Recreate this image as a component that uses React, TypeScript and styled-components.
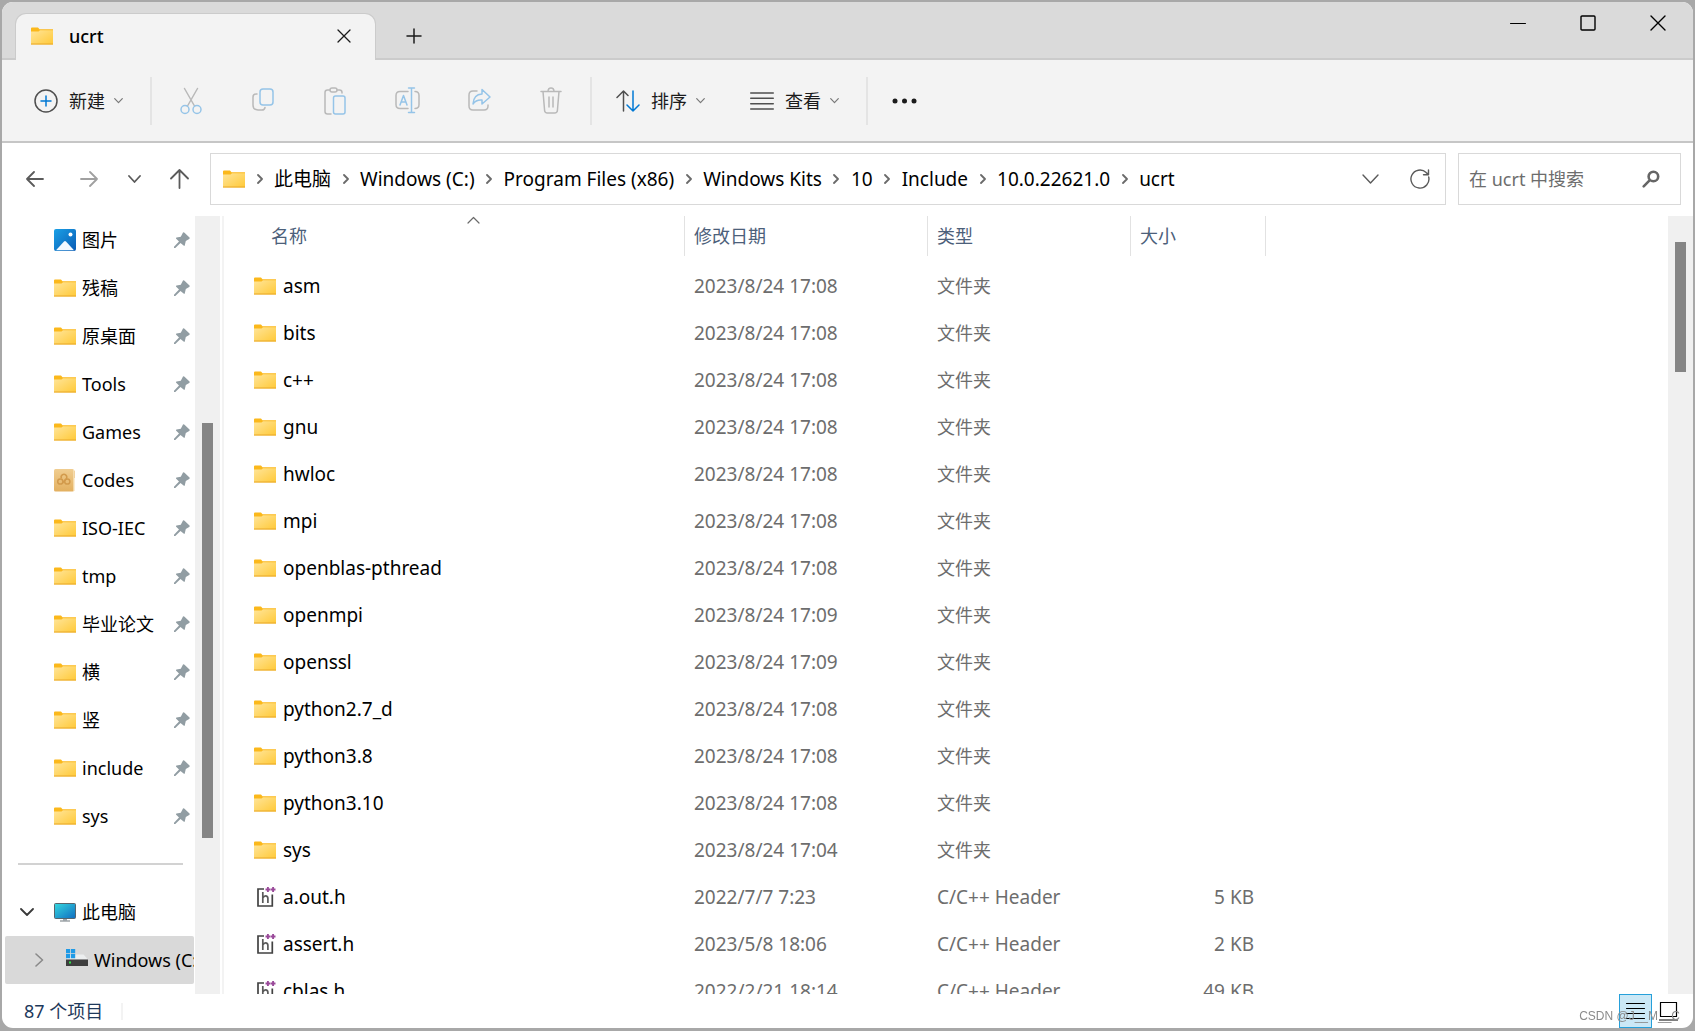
import React from "react";
import styled, { createGlobalStyle, css } from "styled-components";

const Global = createGlobalStyle`
  * { box-sizing: border-box; }
  html, body, #root { height: 100%; }
  body {
    margin: 0;
    overflow: hidden;
    background: #a8a8a8;
    color: #000;
    font: 19px/24px "Noto Sans", "Noto Sans CJK SC", sans-serif;
  }
  button, input, table { font: inherit; color: inherit; }
  button { border: 0; padding: 0; background: none; display: flex; align-items: center; }
  svg { display: block; flex: none; }
  ul, ol { list-style: none; margin: 0; padding: 0; }
  a { color: inherit; text-decoration: none; }
`;

const Window = styled.main`
  height: 100vh;
  padding: 2px 2px 3px;
  display: flex;
  flex-direction: column;
`;
const Body = styled.div`
  flex: 1;
  min-height: 0;
  display: flex;
  flex-direction: column;
  background: #fff;
  border-radius: 11px;
  overflow: hidden;
`;

const TitleBar = styled.header`
  height: 58px;
  flex: none;
  display: flex;
  align-items: flex-end;
  padding-left: 13px;
  background: #dadada;
  box-shadow: inset 0 -2px #cbcbcb;
`;
const Tab = styled.div`
  width: 361px;
  height: 47px;
  display: flex;
  align-items: center;
  padding: 0 24px 2px 15px;
  border: 1px solid #cbcbcb;
  border-bottom: 0;
  border-radius: 11px 11px 0 0;
  background: #f3f3f3;
`;
const TabTitle = styled.span`
  flex: 1;
  margin-left: 16px;
  font-size: 18px;
  font-weight: 500;
`;
const NewTab = styled.button`
  height: 47px;
  margin-left: 30px;
  padding-bottom: 2px;
`;
const Caption = styled.div`
  margin-left: auto;
  align-self: flex-start;
  display: flex;
`;
const CaptionButton = styled.button`
  width: 70px;
  height: 41px;
  justify-content: center;
`;

const Toolbar = styled.div`
  height: 83px;
  flex: none;
  display: flex;
  align-items: center;
  background: #f3f3f3;
  border-bottom: 2px solid #c6c6c6;
  font-size: 18px;
  color: #1b1b1b;
`;
const ToolMenu = styled.button<{ $width: number; $start?: number }>`
  width: ${(p) => p.$width}px;
  height: 48px;
  gap: 9px;
  padding-left: ${(p) => p.$start ?? 24}px;
`;
const MenuLabel = styled.span`
  margin-left: 2px;
`;
const ToolButton = styled.button`
  width: 72px;
  height: 48px;
  justify-content: center;
`;
const ToolGroup = styled.div`
  display: flex;
  padding: 0 3px;
`;
const Divider = styled.span`
  width: 2px;
  height: 48px;
  background: #e4e4e4;
`;

const AddressRow = styled.div`
  height: 73px;
  flex: none;
  display: flex;
  align-items: center;
  padding: 0 12px 1px 0;
`;
const NavButtons = styled.nav`
  width: 208px;
  display: flex;
  padding-left: 6px;
`;
const NavButton = styled.button<{ $slim?: boolean }>`
  width: ${(p) => (p.$slim ? 36 : 54)}px;
  height: 48px;
  justify-content: center;
`;
const AddressBox = styled.div`
  flex: 1;
  min-width: 0;
  height: 52px;
  display: flex;
  align-items: center;
  padding-left: 12px;
  border: 1px solid #d9d9d9;
`;
const Crumbs = styled.ol`
  flex: 1;
  min-width: 0;
  display: flex;
  overflow: hidden;
`;
const Crumb = styled.li`
  display: flex;
  align-items: center;
  white-space: nowrap;
`;
const CrumbArrow = styled.span`
  width: 29px;
  display: flex;
  justify-content: center;
`;
const BoxButton = styled.button`
  width: 50px;
  height: 50px;
  justify-content: center;
`;
const SearchBox = styled.label`
  width: 223px;
  height: 52px;
  display: flex;
  align-items: center;
  margin-left: 12px;
  padding: 0 20px 0 10px;
  border: 1px solid #d9d9d9;
`;
const SearchInput = styled.input`
  flex: 1;
  min-width: 0;
  border: 0;
  padding: 0;
  outline: 0;
  background: none;
  font-size: 18px;
  &::placeholder { color: #6d6d6d; opacity: 1; }
`;

const Content = styled.div`
  flex: 1;
  min-height: 0;
  display: flex;
`;
const Sidebar = styled.nav`
  width: 193px;
  flex: none;
  overflow: hidden;
`;
const sideRow = css`
  height: 48px;
  display: flex;
  align-items: center;
  white-space: nowrap;
  font-size: 18px;
`;
const QuickLink = styled.a`
  ${sideRow}
  padding: 0 5px 0 52px;
  gap: 6px;
`;
const LinkText = styled.span`
  flex: 1;
`;
const SideDivider = styled.hr`
  height: 2px;
  margin: 23px 12px 23px 16px;
  border: 0;
  background: #d2d2d2;
`;
const TreeItem = styled.a<{ $selected?: boolean; $depth: number }>`
  ${sideRow}
  margin: 0 1px 0 3px;
  padding-left: ${(p) => 15 + p.$depth * 12}px;
  gap: 6px;
  overflow: hidden;
  border-radius: 2px;
  background: ${(p) => (p.$selected ? "#d9d9d9" : "transparent")};
`;
const TreeArrow = styled.span`
  width: 28px;
  flex: none;
  display: flex;
`;
const Track = styled.div<{ $top: number; $thumb: number }>`
  width: 25px;
  flex: none;
  background: #f0f0f0;
  &::before {
    content: "";
    display: block;
    width: 11px;
    height: ${(p) => p.$thumb}%;
    margin: ${(p) => p.$top}px 7px 0;
    background: #858585;
  }
`;
const Splitter = styled.div`
  width: 4px;
  flex: none;
  border-right: 2px solid #f3f3f3;
`;
const ListPane = styled.section`
  position: relative;
  flex: 1;
  min-width: 0;
  overflow: hidden;
`;
const SortMark = styled.span`
  position: absolute;
  top: 0;
  left: 243px;
`;
const FileTable = styled.table`
  width: 1042px;
  table-layout: fixed;
  border-collapse: separate;
  border-spacing: 0;
  thead::after { content: ""; display: block; height: 6px; }
`;
const HeadCell = styled.th<{ $width: number; $pad?: number }>`
  width: ${(p) => p.$width}px;
  height: 40px;
  padding: 0 0 0 ${(p) => p.$pad ?? 9}px;
  border-right: 1px solid #e2e2e2;
  text-align: left;
  font-size: 18px;
  font-weight: 400;
  color: #4c607a;
`;
const Cell = styled.td<{ $num?: boolean; $cjk?: boolean }>`
  height: 47px;
  padding: 0 12px 0 9px;
  white-space: nowrap;
  text-align: ${(p) => (p.$num ? "right" : "left")};
  font-size: ${(p) => (p.$cjk ? 18 : 19)}px;
  color: #6d6d6d;
`;
const FileName = styled.div`
  display: flex;
  align-items: center;
  gap: 7px;
  padding-left: 21px;
  font-size: 19px;
  color: #000;
`;

const StatusBar = styled.footer`
  height: 34px;
  flex: none;
  display: flex;
  align-items: center;
  padding: 0 8px 0 22px;
  font-size: 18px;
  color: #1e395b;
`;
const StatusRule = styled.span`
  width: 2px;
  height: 17px;
  margin-left: 18px;
  background: #f3f3f3;
`;
const Views = styled.div`
  margin-left: auto;
  display: flex;
`;
const ViewButton = styled.button<{ $on?: boolean }>`
  width: 33px;
  height: 34px;
  justify-content: center;
  border: 1px solid ${(p) => (p.$on ? "#26a0da" : "transparent")};
  background: ${(p) => (p.$on ? "#cbe8f6" : "transparent")};
`;
const Watermark = styled.span`
  position: fixed;
  right: 15px;
  bottom: 5px;
  font: 12px/20px "Liberation Sans", Arial, sans-serif;
  color: #8b8b8b;
`;

const Folder = () => (
  <svg width="22" height="18" viewBox="0 0 22 18">
    <defs>
      <linearGradient id="folderFace" x1="0" y1="0" x2="1" y2="1">
        <stop offset="0" stopColor="#ffe59a" />
        <stop offset="1" stopColor="#ffc937" />
      </linearGradient>
    </defs>
    <path d="M0 1.5Q0 .5 1 .5h6l1.500 1.700H22V6H0z" fill="#fbb81b" />
    <path d="M0 4.500h7.500L9 3.200h13v14.300H0z" fill="url(#folderFace)" />
    <path d="M0 17h22" stroke="#e9a82a" />
  </svg>
);

const Picture = () => (
  <svg width="22" height="22" viewBox="0 0 22 22">
    <defs>
      <linearGradient id="picSky" x1="0" y1="0" x2="1" y2="1">
        <stop offset="0" stopColor="#1aa0e6" />
        <stop offset="1" stopColor="#0a5cb5" />
      </linearGradient>
    </defs>
    <rect width="22" height="22" rx="2" fill="url(#picSky)" />
    <path d="M2 21.3 10 12.6q1-1 2 0l8 8.7z" fill="#f3f9ff" />
    <circle cx="16.5" cy="5.5" r="2" fill="#fff" />
  </svg>
);

const CodesIcon = () => (
  <svg width="22" height="23" viewBox="0 0 22 23">
    <defs>
      <linearGradient id="cover" x1="0" y1="0" x2="0" y2="1">
        <stop offset="0" stopColor="#f0cd90" />
        <stop offset="1" stopColor="#e3b060" />
      </linearGradient>
    </defs>
    <path d="M17 2h4v7h-1v13h-3z" fill="#e0a95a" />
    <rect width="20" height="22.5" rx="1.5" fill="url(#cover)" />
    <path d="M20 1v21" stroke="#f9e5bf" strokeWidth="1.4" />
    <g fill="none" stroke="#d29a4c" strokeWidth="1.5">
      <circle cx="6.3" cy="12.5" r="2.6" />
      <circle cx="13.3" cy="12.5" r="2.6" />
      <path d="M7.5 9.5a2.8 2.8 0 1 1 4.8.2L8.5 14" />
    </g>
  </svg>
);

const Pin = () => (
  <svg width="16" height="17" viewBox="0 0 16 17">
    <path d="M9 .5q.8-.5 1.5.2l5 4.800q.6.8-.3 1.400l-3.400 2.200-1 4.200q-.4 1-1.200.3L6.500 11 1.300 16H0v-1.300L5 9.400 2.200 6.800q-.6-.8.4-1.200l4.200-.9z" fill="#919da3" />
  </svg>
);

const Monitor = () => (
  <svg width="22" height="19" viewBox="0 0 22 19">
    <defs>
      <linearGradient id="screen" x1="0" y1="0" x2="1" y2="1">
        <stop offset="0" stopColor="#35d8e0" />
        <stop offset="1" stopColor="#0f6cc0" />
      </linearGradient>
    </defs>
    <path d="M9 15h4v2.500H9z" fill="#9aa3a9" />
    <path d="M6 18h10" stroke="#6f787e" strokeWidth="1.200" />
    <rect x=".5" y=".5" width="21" height="15" rx="1" fill="url(#screen)" stroke="#56656e" />
  </svg>
);

const Drive = () => (
  <svg width="22" height="22" viewBox="0 0 22 22">
    <path d="M3 5.500h14.500l4.500 5H0z" fill="#eceeef" />
    <path d="M0 0h4.200v4.200H0zM5 0h4.200v4.200H5zM0 5h4.200v4.200H0zM5 5h4.200v4.200H5z" fill="#1f9ae6" />
    <rect y="10.500" width="22" height="6.500" fill="#3e3e3e" />
    <rect x="3" y="12.500" width="2" height="2" fill="#33e04a" />
  </svg>
);

const HeaderFile = () => (
  <svg width="22" height="22" viewBox="0 0 22 22">
    <g fill="none">
      <path d="M10 3H4v17h14.300V8.500" stroke="#424242" strokeWidth="1.700" />
      <path d="M8.800 6v11M8.800 12q1-2.200 2.800-2.200 2.300 0 2.300 2.700V17" stroke="#5a5a5a" strokeWidth="1.700" />
    </g>
    <path d="M11.500 3.500h4.800M13.900 1.100v4.800M16.700 3.500h4.800M19.100 1.100v4.800" stroke="#9a4a9a" strokeWidth="1.900" />
  </svg>
);

const Line: React.FC<{ w: number; h: number; d: string; color?: string; weight?: number; extra?: string; extraColor?: string }> = ({
  w, h, d, color = "#1b1b1b", weight = 1.4, extra, extraColor = "#0078d4",
}) => (
  <svg width={w} height={h} viewBox={`0 0 ${w} ${h}`} fill="none" strokeWidth={weight} strokeLinecap="round" strokeLinejoin="round">
    <path d={d} stroke={color} />
    {extra && <path d={extra} stroke={extraColor} />}
  </svg>
);

const Caret = () => <Line w={9} h={6} d="m.7.7 3.800 4L8.300.7" color="#7a7a7a" weight={1.2} />;
const CrumbChevron = () => <Line w={6} h={10} d="m1 1 4 4-4 4" color="#6a6a6a" weight={1.8} />;

const grey = "#b9b9b9";
const blue = "#95c4e8";
const editTools = [
  { label: "剪切", w: 22, h: 28, d: "M4.500 1.500 14.500 19M17.500 1.500 7.500 19", extra: "M9 22.500a4 4 0 1 1-8 0 4 4 0 0 1 8 0zM21 22.500a4 4 0 1 1-8 0 4 4 0 0 1 8 0z" },
  { label: "复制", w: 22, h: 25, d: "M5 6H4Q1 6 1 9v8q0 5 5 5h4q2.500 0 3-2.500", extra: "M11 1h7q3 0 3 3v10q0 3-3 3h-7q-3 0-3-3V4q0-3 3-3z" },
  { label: "粘贴", w: 22, h: 28, d: "M6 3H3.500Q1 3 1 5.500v19Q1 27 3.500 27H7M13 3h2.500Q18 3 18 5.500V6M8 1h3q2 0 2 2t-2 2H8Q6 5 6 3t2-2z", extra: "M11.500 9H19q2 0 2 2v14q0 2-2 2h-7.500q-2 0-2-2V11q0-2 2-2z" },
  { label: "重命名", w: 25, h: 28, d: "M13 4.500H5q-4 0-4 4v9q0 4 4 4h8M20 4.500q4 0 4 4v9q0 4-4 4", extra: "M5 18 8.500 8.500 12 18M6.200 15h4.600M13.500 1h6M16.500 1v24.500M13.500 25.500h6" },
  { label: "共享", w: 23, h: 25, d: "M9 3H5Q1 3 1 7v11q0 4 4 4h11q4 0 4-4v-1", extra: "M14 1.500 22 9l-8 7V12q-6-.5-9 4 .5-9.500 9-10z" },
  { label: "删除", w: 22, h: 27, d: "M1 4.500h20M8 4.500Q8 1 11 1t3 3.500M3 4.500l1.600 19q.3 2.500 2.700 2.500h7.400q2.400 0 2.700-2.500L19 4.500M9 10v10M13 10v10" },
];

const crumbs = ["此电脑", "Windows (C:)", "Program Files (x86)", "Windows Kits", "10", "Include", "10.0.22621.0", "ucrt"];
const quick = ["图片", "残稿", "原桌面", "Tools", "Games", "Codes", "ISO-IEC", "tmp", "毕业论文", "横", "竖", "include", "sys"];

type Entry = { name: string; date: string; size?: string };
const entries: Entry[] = [
  { name: "asm", date: "2023/8/24 17:08" },
  { name: "bits", date: "2023/8/24 17:08" },
  { name: "c++", date: "2023/8/24 17:08" },
  { name: "gnu", date: "2023/8/24 17:08" },
  { name: "hwloc", date: "2023/8/24 17:08" },
  { name: "mpi", date: "2023/8/24 17:08" },
  { name: "openblas-pthread", date: "2023/8/24 17:08" },
  { name: "openmpi", date: "2023/8/24 17:09" },
  { name: "openssl", date: "2023/8/24 17:09" },
  { name: "python2.7_d", date: "2023/8/24 17:08" },
  { name: "python3.8", date: "2023/8/24 17:08" },
  { name: "python3.10", date: "2023/8/24 17:08" },
  { name: "sys", date: "2023/8/24 17:04" },
  { name: "a.out.h", date: "2022/7/7 7:23", size: "5 KB" },
  { name: "assert.h", date: "2023/5/8 18:06", size: "2 KB" },
  { name: "cblas.h", date: "2022/2/21 18:14", size: "49 KB" },
];

const quickIcon = (name: string) => (name === "图片" ? <Picture /> : name === "Codes" ? <CodesIcon /> : <Folder />);

export default function App() {
  return (
    <Window>
      <Global />
      <Body>
        <TitleBar>
          <Tab>
            <Folder />
            <TabTitle>ucrt</TabTitle>
            <button aria-label="关闭标签页"><Line w={14} h={14} d="m1 1 12 12M13 1 1 13" weight={1.3} /></button>
          </Tab>
          <NewTab aria-label="新建标签页"><Line w={16} h={16} d="M8 1v14M1 8h14" weight={1.5} /></NewTab>
          <Caption>
            <CaptionButton aria-label="最小化"><Line w={16} h={16} d="M.5 8.500h15" color="#000" weight={1} /></CaptionButton>
            <CaptionButton aria-label="最大化"><Line w={16} h={16} d="M2 1h12q1 0 1 1v12q0 1-1 1H2q-1 0-1-1V2q0-1 1-1z" color="#000" /></CaptionButton>
            <CaptionButton aria-label="关闭"><Line w={16} h={16} d="m1 1 14 14M15 1 1 15" color="#000" /></CaptionButton>
          </Caption>
        </TitleBar>

        <Toolbar>
          <ToolMenu $width={148} $start={32}>
            <Line w={24} h={24} d="M23 12a11 11 0 1 1-22 0 11 11 0 0 1 22 0z" color="#4f4f4f" extra="M12 7v10M7 12h10" weight={1.5} />
            <MenuLabel>新建</MenuLabel>
            <Caret />
          </ToolMenu>
          <Divider />
          <ToolGroup>
            {editTools.map(({ label, ...icon }) => (
              <ToolButton key={label} aria-label={label} disabled>
                <Line {...icon} color={grey} extraColor={blue} weight={1.5} />
              </ToolButton>
            ))}
          </ToolGroup>
          <Divider />
          <ToolMenu $width={134}>
            <Line w={24} h={22} d="M7.500 21V1M1 7.500 7.500 1 12 5.500" color="#4f4f4f" extra="M17 1v20M11 15l6 6 6-6" weight={1.5} />
            <MenuLabel>排序</MenuLabel>
            <Caret />
          </ToolMenu>
          <ToolMenu $width={140}>
            <Line w={24} h={18} d="M.7 1h22.600M.7 6.300h22.600M.7 11.700h22.600M.7 17h22.600" color="#4f4f4f" weight={1.4} />
            <MenuLabel>查看</MenuLabel>
            <Caret />
          </ToolMenu>
          <Divider />
          <ToolButton aria-label="更多">
            <svg width="25" height="6" viewBox="0 0 25 6" fill="#1b1b1b">
              <circle cx="3" cy="3" r="2.500" /><circle cx="12.500" cy="3" r="2.500" /><circle cx="22" cy="3" r="2.500" />
            </svg>
          </ToolButton>
        </Toolbar>

        <AddressRow>
          <NavButtons>
            <NavButton aria-label="后退"><Line w={18} h={16} d="M17 8H1M8 1 1 8l7 7" color="#5b5b5b" weight={1.8} /></NavButton>
            <NavButton aria-label="前进"><Line w={18} h={16} d="M1 8h16M10 1l7 7-7 7" color="#a0a0a0" weight={1.8} /></NavButton>
            <NavButton $slim aria-label="最近浏览的位置"><Line w={13} h={8} d="m1 1 5.500 6L12 1" color="#5b5b5b" weight={1.8} /></NavButton>
            <NavButton aria-label="上移"><Line w={19} h={20} d="M9.500 19V1M1 9.500 9.500 1 18 9.500" color="#5b5b5b" weight={1.8} /></NavButton>
          </NavButtons>
          <AddressBox>
            <Folder />
            <Crumbs>
              {crumbs.map((c) => (
                <Crumb key={c}>
                  <CrumbArrow><CrumbChevron /></CrumbArrow>
                  <a href="#">{c}</a>
                </Crumb>
              ))}
            </Crumbs>
            <BoxButton aria-label="以前的位置"><Line w={17} h={10} d="m1 1 7.500 8L16 1" color="#5b5b5b" /></BoxButton>
            <BoxButton aria-label="刷新"><Line w={20} h={20} d="M18.700 8a9 9 0 1 1-2.500-4.400l2.300 2M18.500 1v4.800h-5" color="#5b5b5b" /></BoxButton>
          </AddressBox>
          <SearchBox>
            <SearchInput type="text" placeholder="在 ucrt 中搜索" aria-label="搜索" />
            <Line w={18} h={18} d="M16.200 6.500a4.800 4.800 0 1 1-9.600 0 4.800 4.800 0 0 1 9.600 0zM7.800 10.200 1.700 16.300" color="#666" weight={2.6} />
          </SearchBox>
        </AddressRow>

        <Content>
          <Sidebar>
            {quick.map((name) => (
              <QuickLink key={name} href="#">
                {quickIcon(name)}
                <LinkText>{name}</LinkText>
                <Pin />
              </QuickLink>
            ))}
            <SideDivider />
            <TreeItem href="#" $depth={0}>
              <TreeArrow><Line w={14} h={8} d="m1 1 6 6 6-6" color="#3a3a3a" weight={1.8} /></TreeArrow>
              <Monitor />此电脑
            </TreeItem>
            <TreeItem href="#" $depth={1} $selected>
              <TreeArrow><Line w={14} h={14} d="m4 1 6.500 6L4 13" color="#8a8a8a" weight={1.6} /></TreeArrow>
              <Drive />Windows (C:)
            </TreeItem>
          </Sidebar>
          <Track $top={207} $thumb={53.3} />
          <Splitter />
          <ListPane>
            <SortMark><Line w={13} h={8} d="m1 7 5.500-5.500L12 7" color="#6a6a6a" weight={1.2} /></SortMark>
            <FileTable>
              <thead>
                <tr>
                  <HeadCell $width={461} $pad={47}>名称</HeadCell>
                  <HeadCell $width={243}>修改日期</HeadCell>
                  <HeadCell $width={203}>类型</HeadCell>
                  <HeadCell $width={135}>大小</HeadCell>
                </tr>
              </thead>
              <tbody>
                {entries.map((e) => (
                  <tr key={e.name}>
                    <Cell>
                      <FileName>{e.size ? <HeaderFile /> : <Folder />}{e.name}</FileName>
                    </Cell>
                    <Cell>{e.date}</Cell>
                    <Cell $cjk={!e.size}>{e.size ? "C/C++ Header" : "文件夹"}</Cell>
                    <Cell $num>{e.size}</Cell>
                  </tr>
                ))}
              </tbody>
            </FileTable>
          </ListPane>
          <Track $top={26} $thumb={16.7} />
        </Content>

        <StatusBar>
          <span>87 个项目</span>
          <StatusRule />
          <Views>
            <ViewButton $on aria-label="详细信息"><Line w={19} h={18} d="M.5 1.500h18M.5 6.500h18M.5 11.500h18M.5 16.500h18" color="#000" weight={1} /></ViewButton>
            <ViewButton aria-label="大图标"><Line w={19} h={19} d="M1.500.5h16v14h-16zM.5 18h18" color="#000" weight={1.200} /></ViewButton>
          </Views>
        </StatusBar>
      </Body>
      <Watermark>CSDN @J__M__C</Watermark>
    </Window>
  );
}
